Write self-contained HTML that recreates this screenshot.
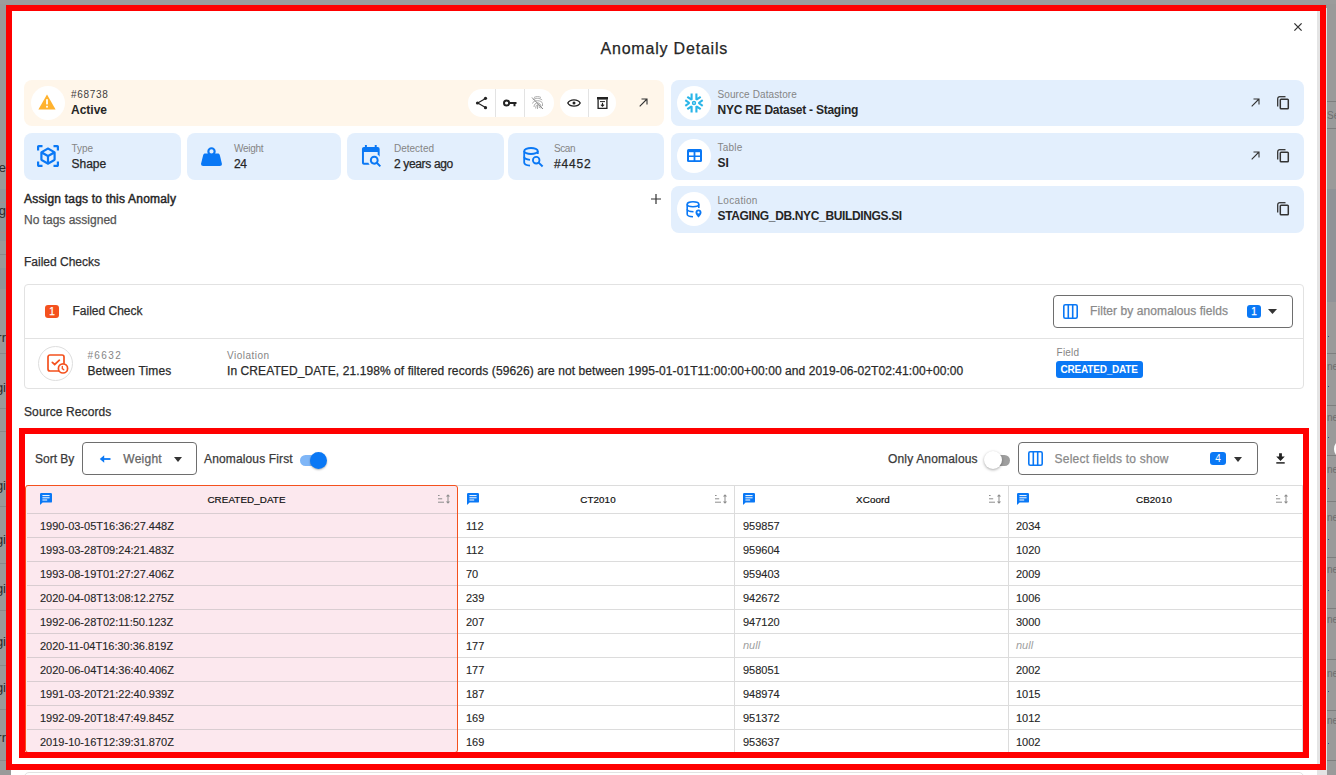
<!DOCTYPE html>
<html><head><meta charset="utf-8">
<style>
*{box-sizing:border-box;margin:0;padding:0}
html,body{width:1336px;height:775px;overflow:hidden}
body{background:#9a9a9a;font-family:"Liberation Sans",sans-serif;color:#262626;position:relative}
.a{position:absolute}
.t{position:absolute;white-space:nowrap;line-height:1;-webkit-text-stroke:0.25px currentColor}
.card{position:absolute;border-radius:8px;background:#e3effd}
.cream{background:#fff6ea}
.circ{position:absolute;width:34px;height:34px;border-radius:50%;background:#fff}
svg{position:absolute;overflow:visible}
</style></head>
<body>
<div class="a" style="left:0px;top:0px;width:1336px;height:4px;background:#9c9c9c"></div><div class="a" style="left:0px;top:189px;width:6px;height:52px;background:#91969a"></div><div class="a" style="left:0px;top:268px;width:6px;height:21px;background:#91969a"></div><div class="a" style="left:0px;top:202px;width:6px;height:1px;background:#a08f92"></div><div class="a" style="left:0px;top:232px;width:6px;height:1px;background:#a08f92"></div><div class="a" style="left:0px;top:254px;width:6px;height:1px;background:#8a8a8a"></div><div class="a" style="left:0px;top:353px;width:6px;height:1px;background:#8a8a8a"></div><div class="a" style="left:0px;top:408px;width:6px;height:1px;background:#8a8a8a"></div><div class="a" style="left:0px;top:431px;width:6px;height:1px;background:#8a8a8a"></div><div class="a" style="left:0px;top:506px;width:6px;height:1px;background:#8a8a8a"></div><div class="a" style="left:0px;top:563px;width:6px;height:1px;background:#8a8a8a"></div><div class="a" style="left:0px;top:610px;width:6px;height:1px;background:#8a8a8a"></div><div class="a" style="left:0px;top:665px;width:6px;height:1px;background:#8a8a8a"></div><div class="a" style="left:0px;top:709px;width:6px;height:1px;background:#8a8a8a"></div><div class="a" style="left:0px;top:760px;width:6px;height:1px;background:#8a8a8a"></div><div class="t" style="left:-94px;width:100px;text-align:right;top:160.5px;font-size:13px;color:#2a2a2a;-webkit-text-stroke:0">le</div><div class="t" style="left:-94px;width:100px;text-align:right;top:203.5px;font-size:13px;color:#2a2a2a;-webkit-text-stroke:0">dg</div><div class="t" style="left:-94px;width:100px;text-align:right;top:330.5px;font-size:13px;color:#2a2a2a;-webkit-text-stroke:0">rr</div><div class="t" style="left:-94px;width:100px;text-align:right;top:380.5px;font-size:13px;color:#2a2a2a;-webkit-text-stroke:0">gi</div><div class="t" style="left:-94px;width:100px;text-align:right;top:478.5px;font-size:13px;color:#2a2a2a;-webkit-text-stroke:0">gi</div><div class="t" style="left:-94px;width:100px;text-align:right;top:532.5px;font-size:13px;color:#2a2a2a;-webkit-text-stroke:0">gi</div><div class="t" style="left:-94px;width:100px;text-align:right;top:581.5px;font-size:13px;color:#2a2a2a;-webkit-text-stroke:0">gi</div><div class="t" style="left:-94px;width:100px;text-align:right;top:634.5px;font-size:13px;color:#2a2a2a;-webkit-text-stroke:0">gi</div><div class="t" style="left:-94px;width:100px;text-align:right;top:680.5px;font-size:13px;color:#2a2a2a;-webkit-text-stroke:0">gi</div><div class="t" style="left:-94px;width:100px;text-align:right;top:730.5px;font-size:13px;color:#2a2a2a;-webkit-text-stroke:0">rr</div><div class="a" style="left:1327px;top:189px;width:9px;height:113px;background:#8f9297"></div><div class="a" style="left:1327px;top:101px;width:9px;height:1px;background:#7e7e7e"></div><div class="a" style="left:1327px;top:128px;width:9px;height:1px;background:#7e7e7e"></div><div class="a" style="left:1327px;top:353px;width:9px;height:1px;background:#7e7e7e"></div><div class="a" style="left:1327px;top:405px;width:9px;height:1px;background:#7e7e7e"></div><div class="a" style="left:1327px;top:455px;width:9px;height:1px;background:#7e7e7e"></div><div class="a" style="left:1327px;top:501px;width:9px;height:1px;background:#7e7e7e"></div><div class="a" style="left:1327px;top:557px;width:9px;height:1px;background:#7e7e7e"></div><div class="a" style="left:1327px;top:608px;width:9px;height:1px;background:#7e7e7e"></div><div class="a" style="left:1327px;top:659px;width:9px;height:1px;background:#7e7e7e"></div><div class="a" style="left:1327px;top:710px;width:9px;height:1px;background:#7e7e7e"></div><div class="a" style="left:1327px;top:760px;width:9px;height:1px;background:#7e7e7e"></div><div class="t" style="left:1327px;top:110.53px;font-size:10px;color:#6e6e6e;-webkit-text-stroke:0px currentColor;">Se</div><div class="t" style="left:1327px;top:361.54px;font-size:10px;color:#6e6e6e;-webkit-text-stroke:0px currentColor;">ne</div><div class="t" style="left:1327px;top:412.54px;font-size:10px;color:#6e6e6e;-webkit-text-stroke:0px currentColor;">ne</div><div class="t" style="left:1327px;top:464.54px;font-size:10px;color:#6e6e6e;-webkit-text-stroke:0px currentColor;">ne</div><div class="t" style="left:1327px;top:512.53px;font-size:10px;color:#6e6e6e;-webkit-text-stroke:0px currentColor;">ne</div><div class="t" style="left:1327px;top:564.53px;font-size:10px;color:#6e6e6e;-webkit-text-stroke:0px currentColor;">ne</div><div class="t" style="left:1327px;top:614.53px;font-size:10px;color:#6e6e6e;-webkit-text-stroke:0px currentColor;">ne</div><div class="t" style="left:1327px;top:668.53px;font-size:10px;color:#6e6e6e;-webkit-text-stroke:0px currentColor;">ne</div><div class="t" style="left:1327px;top:715.53px;font-size:10px;color:#6e6e6e;-webkit-text-stroke:0px currentColor;">ne</div><div class="a" style="left:1328px;top:336px;width:1px;height:1px;background:#3a4a8a"></div><div class="a" style="left:1328px;top:386px;width:1px;height:1px;background:#3a4a8a"></div><div class="a" style="left:1328px;top:437px;width:1px;height:1px;background:#3a4a8a"></div><div class="a" style="left:1328px;top:488px;width:1px;height:1px;background:#3a4a8a"></div><div class="a" style="left:1328px;top:539px;width:1px;height:1px;background:#3a4a8a"></div><div class="a" style="left:1328px;top:590px;width:1px;height:1px;background:#3a4a8a"></div><div class="a" style="left:1328px;top:691px;width:1px;height:1px;background:#3a4a8a"></div><div class="a" style="left:1328px;top:743px;width:1px;height:1px;background:#3a4a8a"></div><div class="a" style="left:1334px;top:439px;width:20px;height:20px;background:#fff;border-radius:50%"></div><div class="a" style="left:11px;top:8px;width:1306px;height:800px;background:#fff"></div><div class="a" style="left:1317px;top:8px;width:10px;height:800px;background:#e4e4e4"></div><div class="t" style="left:600.5px;top:41.06px;font-size:16px;color:#262626;letter-spacing:0.8px;">Anomaly Details</div><svg style="left:1294px;top:23px;" width="8" height="8" viewBox="0 0 8 8"><path d="M0.4 0.4L7.6 7.6M7.6 0.4L0.4 7.6" stroke="#333" stroke-width="1.3"/></svg><div class="card cream" style="left:24px;top:80px;width:640px;height:46px"></div><div class="a" style="left:31px;top:86px;width:34px;height:34px;border-radius:50%;background:#fff"></div><svg style="left:38px;top:94px;" width="18" height="16" viewBox="0 0 18 16"><path d="M9 0.5L17.6 15.6H0.4Z" fill="#ffb22e"/><rect x="8.1" y="5.2" width="1.8" height="5.2" fill="#fff"/><rect x="8.1" y="11.8" width="1.8" height="1.8" fill="#fff"/></svg><div class="t" style="left:71px;top:89.53px;font-size:10px;color:#404040;-webkit-text-stroke:0px currentColor;letter-spacing:0.7px;">#68738</div><div class="t" style="left:71px;top:103.84px;font-size:12px;color:#262626;-webkit-text-stroke:0px currentColor;font-weight:700;">Active</div><div class="a" style="left:468px;top:89px;width:86px;height:28px;border-radius:14px;background:#fff"></div><div class="a" style="left:495px;top:89px;width:1px;height:28px;background:#e3e3e3"></div><div class="a" style="left:524px;top:89px;width:1px;height:28px;background:#e3e3e3"></div><div class="a" style="left:560px;top:89px;width:56px;height:28px;border-radius:14px;background:#fff"></div><div class="a" style="left:588px;top:89px;width:1px;height:28px;background:#e3e3e3"></div><svg style="left:475px;top:96px;" width="13" height="14" viewBox="0 0 13 14"><path d="M10.5 2.5L2.8 7L10.5 11.5" stroke="#222" stroke-width="1.2" fill="none"/><circle cx="10.5" cy="2.3" r="1.6" fill="#222"/><circle cx="2.5" cy="7" r="1.6" fill="#222"/><circle cx="10.5" cy="11.7" r="1.6" fill="#222"/></svg><svg style="left:503px;top:98px;" width="14" height="10" viewBox="0 0 14 10"><circle cx="3.6" cy="5" r="2.6" stroke="#222" stroke-width="2" fill="none"/><path d="M6 4H13.5V6H12.5V8.2H10.5V6H6Z" fill="#222"/></svg><svg style="left:531px;top:96px;" width="13" height="14" viewBox="0 0 13 14"><g stroke="#a3a3a3" stroke-width="0.9" fill="none"><path d="M3 1.5C5 0.3 8 0.3 10 1.5"/><path d="M1.8 4C4.5 1.8 8.5 1.8 11.2 4"/><path d="M1.5 7.5C2 3.8 11 3.8 11.5 7.5V10"/><path d="M3 11C3 5.5 10 5.5 10 11V12.5"/><path d="M4.7 12.5C4.7 7.5 8.4 7.5 8.4 12"/><path d="M6.5 9V13"/></g><path d="M1 1.5L12 13" stroke="#8a8a8a" stroke-width="1"/></svg><svg style="left:567px;top:98px;" width="14" height="10" viewBox="0 0 14 10"><path d="M0.8 5C3 0.8 11 0.8 13.2 5C11 9.2 3 9.2 0.8 5Z" stroke="#222" stroke-width="1.4" fill="none"/><circle cx="7" cy="5" r="1.5" fill="#222"/></svg><svg style="left:597px;top:97px;" width="11" height="12" viewBox="0 0 11 12"><rect x="0" y="0" width="11" height="2.6" fill="#222"/><path d="M1.1 2.6V11.3H9.9V2.6" stroke="#222" stroke-width="1.3" fill="none"/><path d="M3 4.6H8" stroke="#222" stroke-width="1"/><path d="M5.5 5.8V9.2M3.9 7.7L5.5 9.3L7.1 7.7" stroke="#222" stroke-width="1.1" fill="none"/></svg><svg style="left:639px;top:98px;" width="9" height="9" viewBox="0 0 9 9"><path d="M0.7 8.3L8 1M2.5 1H8V6.5" stroke="#333" stroke-width="1.1" fill="none"/></svg><div class="card" style="left:671px;top:80px;width:633px;height:46px"></div><div class="a" style="left:677px;top:86px;width:34px;height:34px;border-radius:50%;background:#fff"></div><svg style="left:682px;top:91px;" width="24" height="24" viewBox="0 0 24 24"><g stroke="#29b5e8" stroke-width="2.1" fill="none" stroke-linejoin="bevel"><path d="M9.6 2.4V8.7L5.3 5.8"/><path d="M14.4 2.4V8.7L18.7 5.8"/><path d="M3.3 9.2L7.3 12L3.3 14.8"/><path d="M20.7 9.2L16.7 12L20.7 14.8"/><path d="M9.6 21.6V15.3L5.3 18.2"/><path d="M14.4 21.6V15.3L18.7 18.2"/></g><circle cx="12" cy="12" r="1.6" stroke="#29b5e8" stroke-width="1.2" fill="#8fd6f2"/></svg><div class="t" style="left:717.5px;top:89.73px;font-size:10px;color:#858585;-webkit-text-stroke:0px currentColor;letter-spacing:0.1px;">Source Datastore</div><div class="t" style="left:717.5px;top:103.84px;font-size:12px;color:#262626;-webkit-text-stroke:0px currentColor;font-weight:700;letter-spacing:-0.25px;">NYC RE Dataset - Staging</div><svg style="left:1251px;top:98px;" width="9" height="9" viewBox="0 0 9 9"><path d="M0.7 8.3L8 1M2.5 1H8V6.5" stroke="#333" stroke-width="1.1" fill="none"/></svg><svg style="left:1277px;top:96px;" width="13" height="14" viewBox="0 0 13 14"><path d="M3 0.7H8.5" stroke="#333" stroke-width="1.3" fill="none"/><path d="M0.7 3V10.5" stroke="#333" stroke-width="1.3" fill="none"/><path d="M0.7 3C0.7 1.5 1.5 0.7 3 0.7" stroke="#333" stroke-width="1.3" fill="none"/><rect x="3.3" y="3.3" width="8" height="9.5" rx="0.8" stroke="#333" stroke-width="1.5" fill="none"/></svg><div class="card" style="left:24px;top:133px;width:157px;height:47px"></div><div class="card" style="left:187px;top:133px;width:154px;height:47px"></div><div class="card" style="left:347px;top:133px;width:157px;height:47px"></div><div class="card" style="left:508px;top:133px;width:156px;height:47px"></div><svg style="left:37px;top:145px;" width="22" height="22" viewBox="2 2 20 20"><path fill="#0a78f5" d="M17,22V20H20V17H22V20.5C22,20.89 21.84,21.24 21.54,21.54C21.24,21.84 20.89,22 20.5,22H17M7,22H3.5C3.11,22 2.76,21.84 2.46,21.54C2.16,21.24 2,20.89 2,20.5V17H4V20H7V22M17,2H20.5C20.89,2 21.240,2.16 21.54,2.46C21.84,2.76 22,3.11 22,3.5V7H20V4H17V2M7,2V4H4V7H2V3.5C2,3.11 2.16,2.76 2.46,2.46C2.76,2.16 3.11,2 3.5,2H7M13,17.25L17,14.95V10.36L13,12.66V17.25M12,10.92L16,8.63L12,6.28L8,8.63L12,10.92M7,14.95L11,17.25V12.66L7,10.36V14.95M18.23,7.59C18.73,7.91 19,8.34 19,8.91V15.23C19,15.8 18.73,16.23 18.23,16.55L12.75,19.73C12.25,20.05 11.75,20.05 11.25,19.730L5.77,16.55C5.27,16.23 5,15.8 5,15.23V8.91C5,8.34 5.27,7.91 5.77,7.59L11.25,4.41C11.5,4.28 11.75,4.22 12,4.22C12.25,4.22 12.5,4.28 12.75,4.41L18.23,7.59Z"/></svg><div class="t" style="left:71.5px;top:143.53px;font-size:10px;color:#858585;-webkit-text-stroke:0px currentColor;">Type</div><div class="t" style="left:71.5px;top:157.84px;font-size:12px;color:#262626;">Shape</div><svg style="left:201px;top:147px;" width="21" height="19.3" viewBox="2 3 20 18"><path fill="#0a78f5" d="M12,3A4,4 0 0,1 16,7C16,7.73 15.81,8.41 15.46,9H18C18.95,9 19.75,9.67 19.95,10.56C21.96,18.57 22,18.78 22,19A2,2 0 0,1 20,21H4A2,2 0 0,1 2,19C2,18.78 2.04,18.57 4.05,10.56C4.25,9.67 5.05,9 6,9H8.54C8.19,8.41 8,7.73 8,7A4,4 0 0,1 12,3M12,5A2,2 0 0,0 10,7A2,2 0 0,0 12,9A2,2 0 0,0 14,7A2,2 0 0,0 12,5Z"/></svg><div class="t" style="left:234px;top:143.53px;font-size:10px;color:#858585;-webkit-text-stroke:0px currentColor;letter-spacing:-0.3px;">Weight</div><div class="t" style="left:234px;top:158.04px;font-size:12px;color:#262626;letter-spacing:-0.5px;">24</div><svg style="left:361px;top:145px;" width="21" height="22" viewBox="3 1 19.4 22.4"><path fill="#0a78f5" d="M15.5,12C18,12 20,14 20,16.5C20,17.38 19.75,18.21 19.31,18.9L22.39,22L21,23.39L17.88,20.32C17.19,20.75 16.37,21 15.5,21C13,21 11,19 11,16.5C11,14 13,12 15.5,12M15.5,14A2.5,2.5 0 0,0 13,16.5A2.5,2.5 0 0,0 15.5,19A2.5,2.5 0 0,0 18,16.5A2.5,2.5 0 0,0 15.5,14M19,8H5V19H9.5C9.81,19.74 10.25,20.41 10.79,21H5C3.89,21 3,20.1 3,19V5C3,3.89 3.89,3 5,3H6V1H8V3H16V1H18V3H19A2,2 0 0,1 21,5V13.030C20.5,12.22 19.8,11.54 19,11.03V8Z"/></svg><div class="t" style="left:394px;top:143.53px;font-size:10px;color:#858585;-webkit-text-stroke:0px currentColor;">Detected</div><div class="t" style="left:394px;top:158.04px;font-size:12px;color:#262626;letter-spacing:-0.35px;">2 years ago</div><svg style="left:523px;top:147px;" width="21" height="20" viewBox="0 0 21 20"><g stroke="#0a78f5" stroke-width="1.8" fill="none"><ellipse cx="8" cy="4" rx="6.8" ry="3"/><path d="M1.2 4V15.5C1.2 17 3.5 18.4 7 18.6"/><path d="M1.2 9.8C1.2 11.3 3.5 12.5 7 12.8"/><path d="M14.8 4V7"/><circle cx="13.2" cy="13.2" r="3.3"/><path d="M15.6 15.6L19.6 19.4" stroke-width="2"/></g></svg><div class="t" style="left:554px;top:143.53px;font-size:10px;color:#858585;-webkit-text-stroke:0px currentColor;letter-spacing:-0.4px;">Scan</div><div class="t" style="left:554px;top:158.04px;font-size:12px;color:#262626;letter-spacing:0.8px;">#4452</div><div class="card" style="left:671px;top:133px;width:633px;height:47px"></div><div class="a" style="left:677px;top:139px;width:34px;height:34px;border-radius:50%;background:#fff"></div><svg style="left:687px;top:149px;" width="15" height="13" viewBox="0 0 15 13"><rect x="0" y="0" width="15" height="13" rx="1.5" fill="#0a78f5"/><rect x="2" y="3.2" width="4.6" height="3.3" fill="#fff"/><rect x="8.4" y="3.2" width="4.6" height="3.3" fill="#fff"/><rect x="2" y="8" width="4.6" height="3.2" fill="#fff"/><rect x="8.4" y="8" width="4.6" height="3.2" fill="#fff"/></svg><div class="t" style="left:717.5px;top:142.53px;font-size:10px;color:#858585;-webkit-text-stroke:0px currentColor;letter-spacing:0.25px;">Table</div><div class="t" style="left:717.5px;top:156.84px;font-size:12px;color:#262626;-webkit-text-stroke:0px currentColor;font-weight:700;">SI</div><svg style="left:1251px;top:151px;" width="9" height="9" viewBox="0 0 9 9"><path d="M0.7 8.3L8 1M2.5 1H8V6.5" stroke="#333" stroke-width="1.1" fill="none"/></svg><svg style="left:1277px;top:149px;" width="13" height="14" viewBox="0 0 13 14"><path d="M3 0.7H8.5" stroke="#333" stroke-width="1.3" fill="none"/><path d="M0.7 3V10.5" stroke="#333" stroke-width="1.3" fill="none"/><path d="M0.7 3C0.7 1.5 1.5 0.7 3 0.7" stroke="#333" stroke-width="1.3" fill="none"/><rect x="3.3" y="3.3" width="8" height="9.5" rx="0.8" stroke="#333" stroke-width="1.5" fill="none"/></svg><div class="t" style="left:24px;top:193.24px;font-size:12px;color:#262626;-webkit-text-stroke:0.45px currentColor;letter-spacing:0.2px;">Assign tags to this Anomaly</div><div class="t" style="left:24px;top:214.34px;font-size:12px;color:#555;">No tags assigned</div><svg style="left:651px;top:194px;" width="10" height="10" viewBox="0 0 10 10"><path d="M5 0V10M0 5H10" stroke="#333" stroke-width="1.2"/></svg><div class="card" style="left:671px;top:186px;width:633px;height:47px"></div><div class="a" style="left:677px;top:192px;width:34px;height:34px;border-radius:50%;background:#fff"></div><svg style="left:686px;top:201px;" width="17" height="17" viewBox="0 0 17 17"><g stroke="#0a78f5" stroke-width="1.6" fill="none"><ellipse cx="7" cy="3.3" rx="5.8" ry="2.5"/><path d="M1.2 3.3V13.3C1.2 14.6 3.5 15.6 7 15.7"/><path d="M1.2 8.3C1.2 9.6 3.5 10.6 7.5 10.7"/><path d="M12.8 3.3V7"/></g><path d="M12.5 8.5C10.8 8.5 9.5 9.8 9.5 11.4C9.5 13.5 12.5 16.5 12.5 16.5C12.5 16.5 15.5 13.5 15.5 11.4C15.5 9.8 14.2 8.5 12.5 8.5Z" fill="#0a78f5"/><circle cx="12.5" cy="11.4" r="1.1" fill="#fff"/></svg><div class="t" style="left:717.5px;top:195.53px;font-size:10px;color:#858585;-webkit-text-stroke:0px currentColor;letter-spacing:0.3px;">Location</div><div class="t" style="left:717.5px;top:210.14px;font-size:12px;color:#262626;-webkit-text-stroke:0px currentColor;font-weight:700;letter-spacing:-0.35px;">STAGING_DB.NYC_BUILDINGS.SI</div><svg style="left:1277px;top:202px;" width="13" height="14" viewBox="0 0 13 14"><path d="M3 0.7H8.5" stroke="#333" stroke-width="1.3" fill="none"/><path d="M0.7 3V10.5" stroke="#333" stroke-width="1.3" fill="none"/><path d="M0.7 3C0.7 1.5 1.5 0.7 3 0.7" stroke="#333" stroke-width="1.3" fill="none"/><rect x="3.3" y="3.3" width="8" height="9.5" rx="0.8" stroke="#333" stroke-width="1.5" fill="none"/></svg><div class="t" style="left:24px;top:256.14px;font-size:12px;color:#2e2e2e;">Failed Checks</div><div class="a" style="left:24px;top:284px;width:1280px;height:105px;border:1px solid #e2e2e2;border-radius:4px"></div><div class="a" style="left:25px;top:338px;width:1278px;height:1px;background:#e2e2e2"></div><div class="a" style="left:45px;top:305px;width:14px;height:13px;background:#f4511e;border-radius:3px"></div><div class="t" style="left:-148px;width:400px;text-align:center;top:307.04px;font-size:10px;color:#fff;">1</div><div class="t" style="left:72.5px;top:305.24px;font-size:12px;color:#2e2e2e;">Failed Check</div><div class="a" style="left:1053px;top:295px;width:240px;height:33px;border:1px solid #6e6e6e;border-radius:4px"></div><svg style="left:1063px;top:304px;" width="15" height="15" viewBox="0 0 15 15"><rect x="0.8" y="0.8" width="13.4" height="13.4" rx="1.5" stroke="#0a78f5" stroke-width="1.6" fill="none"/><path d="M5.3 1V14M9.7 1V14" stroke="#0a78f5" stroke-width="1.6"/></svg><div class="t" style="left:1090px;top:305.34px;font-size:12px;color:#8a8a8a;letter-spacing:0.08px;">Filter by anomalous fields</div><div class="a" style="left:1247px;top:305px;width:14px;height:13px;background:#0a78f5;border-radius:3px"></div><div class="t" style="left:1054px;width:400px;text-align:center;top:307.04px;font-size:10px;color:#fff;">1</div><svg style="left:1268px;top:309px;" width="9" height="5" viewBox="0 0 9 5"><path d="M0 0H9L4.5 5Z" fill="#333"/></svg><div class="a" style="left:38px;top:346px;width:35px;height:35px;border:1px solid #dedede;border-radius:50%;background:#fff"></div><svg style="left:47px;top:354px;" width="22" height="21" viewBox="0 0 22 21"><g stroke="#f4511e" stroke-width="1.7" fill="none" stroke-linecap="round"><path d="M12 17H3A2 2 0 0 1 1 15V3A2 2 0 0 1 3 1H15A2 2 0 0 1 17 3V9.3"/><path d="M5.3 8.3L7.7 10.5L12.4 6.2"/><circle cx="16" cy="14.4" r="4.6" fill="#fff"/><path d="M15.3 12.3V14.6L16.8 15.8" stroke-width="1.3"/></g></svg><div class="t" style="left:87.4px;top:350.54px;font-size:10px;color:#858585;-webkit-text-stroke:0px currentColor;letter-spacing:1.4px;">#6632</div><div class="t" style="left:87.4px;top:365.14px;font-size:12px;color:#2a2a2a;letter-spacing:0.15px;">Between Times</div><div class="t" style="left:227px;top:350.54px;font-size:10px;color:#858585;-webkit-text-stroke:0px currentColor;letter-spacing:0.5px;">Violation</div><div class="t" style="left:227px;top:365.14px;font-size:12px;color:#2a2a2a;letter-spacing:0.085px;">In CREATED_DATE, 21.198% of filtered records (59626) are not between 1995-01-01T11:00:00+00:00 and 2019-06-02T02:41:00+00:00</div><div class="t" style="left:1056.6px;top:348.04px;font-size:10px;color:#858585;-webkit-text-stroke:0px currentColor;letter-spacing:0.2px;">Field</div><div class="a" style="left:1056px;top:361px;width:87px;height:17px;background:#0a78f5;border-radius:3px"></div><div class="t" style="left:1060.5px;top:365.04px;font-size:10px;color:#fff;-webkit-text-stroke:0px currentColor;font-weight:700;letter-spacing:-0.2px;">CREATED_DATE</div><div class="t" style="left:24px;top:405.54px;font-size:12px;color:#2e2e2e;letter-spacing:0.1px;">Source Records</div><div class="t" style="left:35px;top:453.34px;font-size:12px;color:#3a3a3a;">Sort By</div><div class="a" style="left:82px;top:442px;width:115px;height:33px;border:1px solid #6e6e6e;border-radius:4px"></div><svg style="left:99px;top:454px;" width="12" height="10" viewBox="0 0 12 10"><path d="M11.5 5H3" stroke="#0a78f5" stroke-width="1.8" fill="none"/><path d="M0.8 5L5.2 1.2V8.8Z" fill="#0a78f5"/></svg><div class="t" style="left:123.3px;top:453.34px;font-size:12px;color:#666;letter-spacing:0.25px;">Weight</div><svg style="left:174px;top:457px;" width="8" height="5" viewBox="0 0 8 5"><path d="M0 0H8L4 5Z" fill="#333"/></svg><div class="t" style="left:204px;top:453.34px;font-size:12px;color:#3a3a3a;letter-spacing:0.14px;">Anomalous First</div><div class="a" style="left:300px;top:455px;width:24px;height:11px;border-radius:6px;background:#7fb6f7"></div><div class="a" style="left:310px;top:452px;width:17px;height:17px;border-radius:50%;background:#0a78f5;box-shadow:0 1px 2px rgba(0,0,0,.3)"></div><div class="t" style="left:888px;top:453.34px;font-size:12px;color:#3a3a3a;letter-spacing:0.17px;">Only Anomalous</div><div class="a" style="left:986px;top:455px;width:24px;height:11px;border-radius:6px;background:#9e9e9e"></div><div class="a" style="left:984px;top:451px;width:18px;height:18px;border-radius:50%;background:#fff;box-shadow:0 1px 3px rgba(0,0,0,.35)"></div><div class="a" style="left:1018px;top:442px;width:240px;height:33px;border:1px solid #6e6e6e;border-radius:4px"></div><svg style="left:1028px;top:451px;" width="15" height="15" viewBox="0 0 15 15"><rect x="0.8" y="0.8" width="13.4" height="13.4" rx="1.5" stroke="#0a78f5" stroke-width="1.6" fill="none"/><path d="M5.3 1V14M9.7 1V14" stroke="#0a78f5" stroke-width="1.6"/></svg><div class="t" style="left:1054.5px;top:453.34px;font-size:12px;color:#8a8a8a;letter-spacing:0.23px;">Select fields to show</div><div class="a" style="left:1210px;top:452px;width:16px;height:13px;background:#0a78f5;border-radius:3px"></div><div class="t" style="left:1018px;width:400px;text-align:center;top:454.04px;font-size:10px;color:#fff;-webkit-text-stroke:0">4</div><svg style="left:1234px;top:457px;" width="8" height="5" viewBox="0 0 8 5"><path d="M0 0H8L4 5Z" fill="#333"/></svg><svg style="left:1276px;top:453px;" width="9" height="11" viewBox="0 0 9 11"><path d="M3.1 0.3H5.9V3.6H8.8L4.5 8L0.2 3.6H3.1Z" fill="#222"/><path d="M0.3 9.9H8.7" stroke="#222" stroke-width="1.5"/></svg><div class="a" style="left:26px;top:485px;width:1277px;height:268px;border:1px solid #dcdcdc;border-left:none"></div><div class="a" style="left:25px;top:485px;width:433px;height:268px;background:#fce8ee;border:1px solid #f4511e;border-radius:3px"></div><div class="a" style="left:734px;top:485px;width:1px;height:268px;background:#dcdcdc"></div><div class="a" style="left:1008px;top:485px;width:1px;height:268px;background:#dcdcdc"></div><div class="a" style="left:27px;top:513px;width:430px;height:1px;background:#d9cdd1"></div><div class="a" style="left:458px;top:513px;width:845px;height:1px;background:#dcdcdc"></div><div class="a" style="left:27px;top:537px;width:430px;height:1px;background:#d9cdd1"></div><div class="a" style="left:458px;top:537px;width:845px;height:1px;background:#dcdcdc"></div><div class="a" style="left:27px;top:561px;width:430px;height:1px;background:#d9cdd1"></div><div class="a" style="left:458px;top:561px;width:845px;height:1px;background:#dcdcdc"></div><div class="a" style="left:27px;top:585px;width:430px;height:1px;background:#d9cdd1"></div><div class="a" style="left:458px;top:585px;width:845px;height:1px;background:#dcdcdc"></div><div class="a" style="left:27px;top:609px;width:430px;height:1px;background:#d9cdd1"></div><div class="a" style="left:458px;top:609px;width:845px;height:1px;background:#dcdcdc"></div><div class="a" style="left:27px;top:633px;width:430px;height:1px;background:#d9cdd1"></div><div class="a" style="left:458px;top:633px;width:845px;height:1px;background:#dcdcdc"></div><div class="a" style="left:27px;top:657px;width:430px;height:1px;background:#d9cdd1"></div><div class="a" style="left:458px;top:657px;width:845px;height:1px;background:#dcdcdc"></div><div class="a" style="left:27px;top:681px;width:430px;height:1px;background:#d9cdd1"></div><div class="a" style="left:458px;top:681px;width:845px;height:1px;background:#dcdcdc"></div><div class="a" style="left:27px;top:705px;width:430px;height:1px;background:#d9cdd1"></div><div class="a" style="left:458px;top:705px;width:845px;height:1px;background:#dcdcdc"></div><div class="a" style="left:27px;top:729px;width:430px;height:1px;background:#d9cdd1"></div><div class="a" style="left:458px;top:729px;width:845px;height:1px;background:#dcdcdc"></div><div class="a" style="left:27px;top:753px;width:430px;height:1px;background:#d9cdd1"></div><div class="a" style="left:458px;top:753px;width:845px;height:1px;background:#dcdcdc"></div><svg style="left:40px;top:493px;" width="12" height="12" viewBox="0 0 12 12"><path fill="#0a78f5" d="M1.2 0H10.8A1.2 1.2 0 0 1 12 1.2V8.4A1.2 1.2 0 0 1 10.8 9.6H2.6L0 12V1.2A1.2 1.2 0 0 1 1.2 0Z"/><path d="M2.4 2.6H9.6M2.4 4.8H9.6M2.4 7H7.2" stroke="#fff" stroke-width="1"/></svg><div class="t" style="left:46.5px;width:400px;text-align:center;top:494.70px;font-size:9.8px;color:#111;letter-spacing:0.1px;-webkit-text-stroke:0.2px #111">CREATED_DATE</div><svg style="left:438px;top:494px;" width="13" height="10" viewBox="0 0 13 10"><g stroke="#8d8d8d" stroke-width="1" fill="none"><path d="M0 1.5H1.6M0 4.8H4.2M0 8.2H6"/><path d="M10 1V9"/></g><path d="M7.9 2.6L10 0.2L12.1 2.6ZM7.9 7.4L10 9.8L12.1 7.4Z" fill="#8d8d8d"/></svg><svg style="left:467px;top:493px;" width="12" height="12" viewBox="0 0 12 12"><path fill="#0a78f5" d="M1.2 0H10.8A1.2 1.2 0 0 1 12 1.2V8.4A1.2 1.2 0 0 1 10.8 9.6H2.6L0 12V1.2A1.2 1.2 0 0 1 1.2 0Z"/><path d="M2.4 2.6H9.6M2.4 4.8H9.6M2.4 7H7.2" stroke="#fff" stroke-width="1"/></svg><div class="t" style="left:398px;width:400px;text-align:center;top:494.70px;font-size:9.8px;color:#111;letter-spacing:0.1px;-webkit-text-stroke:0.2px #111">CT2010</div><svg style="left:715px;top:494px;" width="13" height="10" viewBox="0 0 13 10"><g stroke="#8d8d8d" stroke-width="1" fill="none"><path d="M0 1.5H1.6M0 4.8H4.2M0 8.2H6"/><path d="M10 1V9"/></g><path d="M7.9 2.6L10 0.2L12.1 2.6ZM7.9 7.4L10 9.8L12.1 7.4Z" fill="#8d8d8d"/></svg><svg style="left:743px;top:493px;" width="12" height="12" viewBox="0 0 12 12"><path fill="#0a78f5" d="M1.2 0H10.8A1.2 1.2 0 0 1 12 1.2V8.4A1.2 1.2 0 0 1 10.8 9.6H2.6L0 12V1.2A1.2 1.2 0 0 1 1.2 0Z"/><path d="M2.4 2.6H9.6M2.4 4.8H9.6M2.4 7H7.2" stroke="#fff" stroke-width="1"/></svg><div class="t" style="left:673px;width:400px;text-align:center;top:494.70px;font-size:9.8px;color:#111;letter-spacing:0.1px;-webkit-text-stroke:0.2px #111">XCoord</div><svg style="left:989px;top:494px;" width="13" height="10" viewBox="0 0 13 10"><g stroke="#8d8d8d" stroke-width="1" fill="none"><path d="M0 1.5H1.6M0 4.8H4.2M0 8.2H6"/><path d="M10 1V9"/></g><path d="M7.9 2.6L10 0.2L12.1 2.6ZM7.9 7.4L10 9.8L12.1 7.4Z" fill="#8d8d8d"/></svg><svg style="left:1017px;top:493px;" width="12" height="12" viewBox="0 0 12 12"><path fill="#0a78f5" d="M1.2 0H10.8A1.2 1.2 0 0 1 12 1.2V8.4A1.2 1.2 0 0 1 10.8 9.6H2.6L0 12V1.2A1.2 1.2 0 0 1 1.2 0Z"/><path d="M2.4 2.6H9.6M2.4 4.8H9.6M2.4 7H7.2" stroke="#fff" stroke-width="1"/></svg><div class="t" style="left:954px;width:400px;text-align:center;top:494.70px;font-size:9.8px;color:#111;letter-spacing:0.1px;-webkit-text-stroke:0.2px #111">CB2010</div><svg style="left:1276px;top:494px;" width="13" height="10" viewBox="0 0 13 10"><g stroke="#8d8d8d" stroke-width="1" fill="none"><path d="M0 1.5H1.6M0 4.8H4.2M0 8.2H6"/><path d="M10 1V9"/></g><path d="M7.9 2.6L10 0.2L12.1 2.6ZM7.9 7.4L10 9.8L12.1 7.4Z" fill="#8d8d8d"/></svg><div class="t" style="left:40px;top:521.19px;font-size:11px;color:#262626;-webkit-text-stroke:0.12px currentColor;">1990-03-05T16:36:27.448Z</div><div class="t" style="left:466px;top:521.19px;font-size:11px;color:#262626;-webkit-text-stroke:0.12px currentColor;">112</div><div class="t" style="left:743px;top:521.19px;font-size:11px;color:#262626;-webkit-text-stroke:0.12px currentColor;">959857</div><div class="t" style="left:1016px;top:521.19px;font-size:11px;color:#262626;-webkit-text-stroke:0.12px currentColor;">2034</div><div class="t" style="left:40px;top:545.19px;font-size:11px;color:#262626;-webkit-text-stroke:0.12px currentColor;">1993-03-28T09:24:21.483Z</div><div class="t" style="left:466px;top:545.19px;font-size:11px;color:#262626;-webkit-text-stroke:0.12px currentColor;">112</div><div class="t" style="left:743px;top:545.19px;font-size:11px;color:#262626;-webkit-text-stroke:0.12px currentColor;">959604</div><div class="t" style="left:1016px;top:545.19px;font-size:11px;color:#262626;-webkit-text-stroke:0.12px currentColor;">1020</div><div class="t" style="left:40px;top:569.19px;font-size:11px;color:#262626;-webkit-text-stroke:0.12px currentColor;">1993-08-19T01:27:27.406Z</div><div class="t" style="left:466px;top:569.19px;font-size:11px;color:#262626;-webkit-text-stroke:0.12px currentColor;">70</div><div class="t" style="left:743px;top:569.19px;font-size:11px;color:#262626;-webkit-text-stroke:0.12px currentColor;">959403</div><div class="t" style="left:1016px;top:569.19px;font-size:11px;color:#262626;-webkit-text-stroke:0.12px currentColor;">2009</div><div class="t" style="left:40px;top:593.19px;font-size:11px;color:#262626;-webkit-text-stroke:0.12px currentColor;">2020-04-08T13:08:12.275Z</div><div class="t" style="left:466px;top:593.19px;font-size:11px;color:#262626;-webkit-text-stroke:0.12px currentColor;">239</div><div class="t" style="left:743px;top:593.19px;font-size:11px;color:#262626;-webkit-text-stroke:0.12px currentColor;">942672</div><div class="t" style="left:1016px;top:593.19px;font-size:11px;color:#262626;-webkit-text-stroke:0.12px currentColor;">1006</div><div class="t" style="left:40px;top:617.19px;font-size:11px;color:#262626;-webkit-text-stroke:0.12px currentColor;">1992-06-28T02:11:50.123Z</div><div class="t" style="left:466px;top:617.19px;font-size:11px;color:#262626;-webkit-text-stroke:0.12px currentColor;">207</div><div class="t" style="left:743px;top:617.19px;font-size:11px;color:#262626;-webkit-text-stroke:0.12px currentColor;">947120</div><div class="t" style="left:1016px;top:617.19px;font-size:11px;color:#262626;-webkit-text-stroke:0.12px currentColor;">3000</div><div class="t" style="left:40px;top:641.19px;font-size:11px;color:#262626;-webkit-text-stroke:0.12px currentColor;">2020-11-04T16:30:36.819Z</div><div class="t" style="left:466px;top:641.19px;font-size:11px;color:#262626;-webkit-text-stroke:0.12px currentColor;">177</div><div class="t" style="left:743px;top:640.19px;font-size:11px;color:#a0a0a0;-webkit-text-stroke:0px currentColor;font-style:italic">null</div><div class="t" style="left:1016px;top:640.19px;font-size:11px;color:#a0a0a0;-webkit-text-stroke:0px currentColor;font-style:italic">null</div><div class="t" style="left:40px;top:665.19px;font-size:11px;color:#262626;-webkit-text-stroke:0.12px currentColor;">2020-06-04T14:36:40.406Z</div><div class="t" style="left:466px;top:665.19px;font-size:11px;color:#262626;-webkit-text-stroke:0.12px currentColor;">177</div><div class="t" style="left:743px;top:665.19px;font-size:11px;color:#262626;-webkit-text-stroke:0.12px currentColor;">958051</div><div class="t" style="left:1016px;top:665.19px;font-size:11px;color:#262626;-webkit-text-stroke:0.12px currentColor;">2002</div><div class="t" style="left:40px;top:689.19px;font-size:11px;color:#262626;-webkit-text-stroke:0.12px currentColor;">1991-03-20T21:22:40.939Z</div><div class="t" style="left:466px;top:689.19px;font-size:11px;color:#262626;-webkit-text-stroke:0.12px currentColor;">187</div><div class="t" style="left:743px;top:689.19px;font-size:11px;color:#262626;-webkit-text-stroke:0.12px currentColor;">948974</div><div class="t" style="left:1016px;top:689.19px;font-size:11px;color:#262626;-webkit-text-stroke:0.12px currentColor;">1015</div><div class="t" style="left:40px;top:713.19px;font-size:11px;color:#262626;-webkit-text-stroke:0.12px currentColor;">1992-09-20T18:47:49.845Z</div><div class="t" style="left:466px;top:713.19px;font-size:11px;color:#262626;-webkit-text-stroke:0.12px currentColor;">169</div><div class="t" style="left:743px;top:713.19px;font-size:11px;color:#262626;-webkit-text-stroke:0.12px currentColor;">951372</div><div class="t" style="left:1016px;top:713.19px;font-size:11px;color:#262626;-webkit-text-stroke:0.12px currentColor;">1012</div><div class="t" style="left:40px;top:737.19px;font-size:11px;color:#262626;-webkit-text-stroke:0.12px currentColor;">2019-10-16T12:39:31.870Z</div><div class="t" style="left:466px;top:737.19px;font-size:11px;color:#262626;-webkit-text-stroke:0.12px currentColor;">169</div><div class="t" style="left:743px;top:737.19px;font-size:11px;color:#262626;-webkit-text-stroke:0.12px currentColor;">953637</div><div class="t" style="left:1016px;top:737.19px;font-size:11px;color:#262626;-webkit-text-stroke:0.12px currentColor;">1002</div><div class="a" style="left:24px;top:772px;width:1280px;height:60px;border:1px solid #e2e2e2;border-radius:5px"></div><div class="a" style="left:19px;top:428px;width:1290px;height:330px;border:6px solid #f00"></div><div class="a" style="left:6px;top:5px;width:1320px;height:765px;border:6px solid #f00"></div></body></html>
